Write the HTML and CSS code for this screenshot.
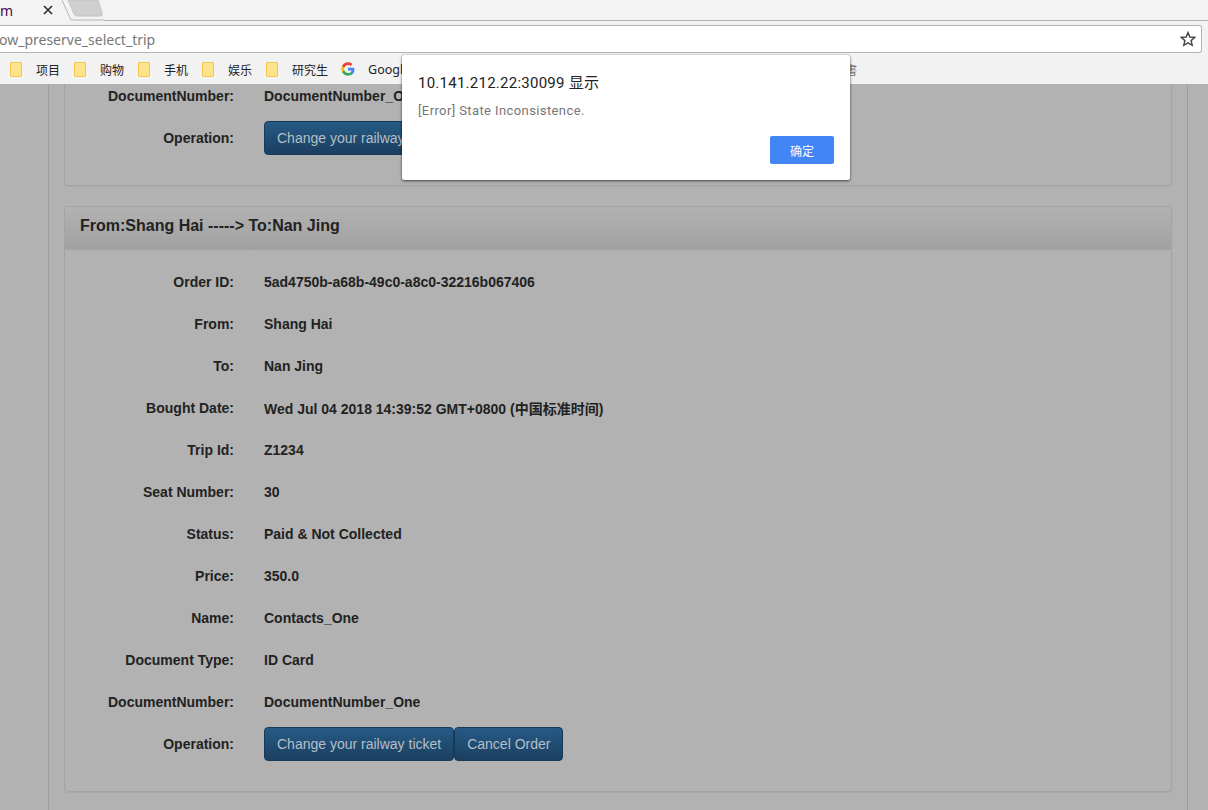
FILE: index.html
```html
<!DOCTYPE html>
<html lang="en">
<head>
  <meta charset="utf-8">
  <title>Order list</title>
  <link rel="stylesheet" href="styles.css">
</head>
<body>

<!-- browser chrome -->
<header class="chrome">
  <div class="tabstrip">
    <span class="tab-title">m</span>
    <svg class="tab-close" width="10" height="10" viewBox="0 0 10 10"><path d="M1 1l8 8M9 1l-8 8" stroke="#333" stroke-width="1.7" fill="none"/></svg>
    <svg class="tab-edge" width="42" height="21" viewBox="0 0 42 21">
      <path d="M0 0l9 20h33" stroke="#b4b4b4" fill="none"/>
      <path d="M6 0h30l4 13q1 3-2 3H15q-2 0-3-2z" fill="#d0d0d0" stroke="#c2c2c2"/>
    </svg>
  </div>
  <div class="toolbar">
    <div class="omnibox">
      <span class="url">ow_preserve_select_trip</span>
      <svg class="star" width="16" height="16" viewBox="0 0 16 16"><path d="M8 1.6l1.9 4.4 4.8.4-3.6 3.2 1.1 4.7L8 11.8l-4.2 2.5 1.1-4.7L1.300 6.400l4.800-.4z" fill="none" stroke="#4a4a4a" stroke-width="1.500"/></svg>
    </div>
  </div>
  <div class="bookmarks">
    <span class="bm"><i class="folder"></i>项目</span>
    <span class="bm"><i class="folder"></i>购物</span>
    <span class="bm"><i class="folder"></i>手机</span>
    <span class="bm"><i class="folder"></i>娱乐</span>
    <span class="bm"><i class="folder"></i>研究生</span>
    <span class="bm bm-g">
      <svg width="14" height="14" viewBox="0 0 48 48">
        <path fill="#4285f4" d="M46 24.500c0-1.600-.1-3.100-.4-4.500H24v9h12.400c-.5 2.900-2.100 5.300-4.600 7v5.800h7.400c4.300-4 6.800-9.900 6.800-17.300z"/>
        <path fill="#34a853" d="M24 47c6.200 0 11.400-2 15.200-5.600l-7.400-5.800c-2 1.400-4.700 2.200-7.800 2.200-6 0-11-4-12.800-9.500H3.600v6C7.400 41.800 15.100 47 24 47z"/>
        <path fill="#fbbc05" d="M11.200 28.300c-.5-1.400-.7-2.800-.7-4.300s.3-3 .7-4.300v-6H3.600C2.100 16.800 1 20.300 1 24s.9 7.200 2.600 10.300z"/>
        <path fill="#ea4335" d="M24 10.200c3.400 0 6.400 1.200 8.800 3.400l6.600-6.600C35.400 3.300 30.200 1 24 1 15.100 1 7.400 6.200 3.600 13.700l7.600 6C13 14.200 18 10.200 24 10.200z"/>
      </svg>Google</span>
    <span class="bm bm-rest">書</span>
  </div>
</header>

<!-- page behind the alert, already dimmed -->
<main class="page">
  <div class="box">

    <section class="panel panel-cut">
      <div class="panel-body">
        <div class="row"><span class="key">DocumentNumber:</span><span>DocumentNumber_One</span></div>
        <div class="row"><span class="key">Operation:</span><span class="btns"><button>Change your railway ticket</button><button>Cancel Order</button></span></div>
      </div>
    </section>

    <section class="panel">
      <h3 class="panel-head">From:Shang Hai -----&gt; To:Nan Jing</h3>
      <div class="panel-body">
        <div class="row"><span class="key">Order ID:</span><span>5ad4750b-a68b-49c0-a8c0-32216b067406</span></div>
        <div class="row"><span class="key">From:</span><span>Shang Hai</span></div>
        <div class="row"><span class="key">To:</span><span>Nan Jing</span></div>
        <div class="row"><span class="key">Bought Date:</span><span>Wed Jul 04 2018 14:39:52 GMT+0800 (中国标准时间)</span></div>
        <div class="row"><span class="key">Trip Id:</span><span>Z1234</span></div>
        <div class="row"><span class="key">Seat Number:</span><span>30</span></div>
        <div class="row"><span class="key">Status:</span><span>Paid &amp; Not Collected</span></div>
        <div class="row"><span class="key">Price:</span><span>350.0</span></div>
        <div class="row"><span class="key">Name:</span><span>Contacts_One</span></div>
        <div class="row"><span class="key">Document Type:</span><span>ID Card</span></div>
        <div class="row"><span class="key">DocumentNumber:</span><span>DocumentNumber_One</span></div>
        <div class="row"><span class="key">Operation:</span><span class="btns"><button>Change your railway ticket</button><button>Cancel Order</button></span></div>
      </div>
    </section>

  </div>
</main>

<!-- alert -->
<div class="alert">
  <div class="alert-title">10.141.212.22:30099 显示</div>
  <div class="alert-msg">[Error] State Inconsistence.</div>
  <div class="alert-foot"><button class="alert-ok">确定</button></div>
</div>

</body>
</html>
```

FILE: styles.css
```css
html, body {margin:0;height:100%;overflow:hidden}
body {background:#b2b2b2;font-family:"Liberation Sans","Noto Sans CJK SC",sans-serif}

/* chrome */
.chrome {background:#f2f2f2;height:84px;position:relative;z-index:1}
.tabstrip {height:20px;position:relative;background:#f3f3f3}
.tabstrip {display:flex;align-items:center}
.tab-title {font:14px "Noto Sans",sans-serif;color:#4b0a4b;margin-left:0;width:43px}
.tab-close {flex:none}
.tab-edge {flex:none;margin:0 0 0 9px;align-self:flex-start}
.tabstrip::after {content:"";flex:1;height:1px;background:#b4b4b4;align-self:flex-end;margin-bottom:-1px}
.toolbar {padding:5px 6px 0 0}
.omnibox {height:26px;background:#fff;border:1px solid #b4b4b4;border-left:0;border-radius:0 3px 3px 0;
          display:flex;align-items:center;justify-content:space-between;padding-right:5px}
.url {font:14px "Noto Sans",sans-serif;color:#777;margin-left:-1px}
.bookmarks {display:flex;align-items:center;height:30px;padding:1px 0 0 10px;gap:14px;font:12px "Noto Sans CJK SC","Noto Sans",sans-serif;color:#222}
.bm {display:flex;align-items:center;gap:15px;white-space:nowrap}
.folder {width:10px;height:13px;background:#fde48c;border:1px solid #f2c94c;border-radius:1px;display:block;margin-right:-1px}
.bm-g {gap:13px;font-family:"Noto Sans",sans-serif;font-size:12.500px;margin-left:-1px}
.bm-rest {color:#777;margin-left:421px}

/* page */
.page {height:726px;overflow:hidden;padding-left:48px;color:#222;font-size:14px;font-weight:bold}
.box {width:1108px;min-height:800px;border:solid #9e9e9e;border-width:0 1px;padding:0 15px;margin-top:-9px}
.panel {border:1px solid #a3a3a3;border-radius:4px;margin-bottom:20px;box-shadow:0 1px 1px #a8a8a8}
.panel-cut {border-top:0;border-radius:0 0 4px 4px}
.panel-head {margin:0;height:42px;line-height:37px;padding-left:15px;font-size:16px;
             background:linear-gradient(#b2b2b2,#a1a1a1);border-bottom:1px solid #a3a3a3;border-radius:3px 3px 0 0}
.panel-body {padding:11px 0 26px}
.panel-cut .panel-body {padding-top:0}
.row {height:42px;display:flex;align-items:center;gap:30px}
.key {width:169px;text-align:right}
.btns {display:flex}
button {font:14px "Liberation Sans",sans-serif;color:#b5bfc7;height:34px;padding:0 12px;border:1px solid #173a58;border-radius:4px;
        background:linear-gradient(#265a85,#1b3f61)}

/* alert */
.alert {position:absolute;left:402px;top:55px;width:448px;height:125px;background:#fff;border-radius:2px;
        box-shadow:0 1px 3px #0009,0 0 1px #0006;z-index:2;padding:0 16px;box-sizing:border-box;display:flex;flex-direction:column}
.alert-title {font:15px "Roboto","Noto Sans CJK SC",sans-serif;letter-spacing:.25px;color:#222;margin-top:19px;line-height:18px}
.alert-msg {font:13px "Roboto",sans-serif;color:#777;margin-top:10px;line-height:18px;letter-spacing:.4px}
.alert-foot {display:flex;justify-content:flex-end;margin-top:16px}
.alert-ok {width:64px;height:28px;padding:0;border:0;border-radius:2px;background:#4285f4;color:#fff;font:12px "Noto Sans CJK SC",sans-serif}
```
